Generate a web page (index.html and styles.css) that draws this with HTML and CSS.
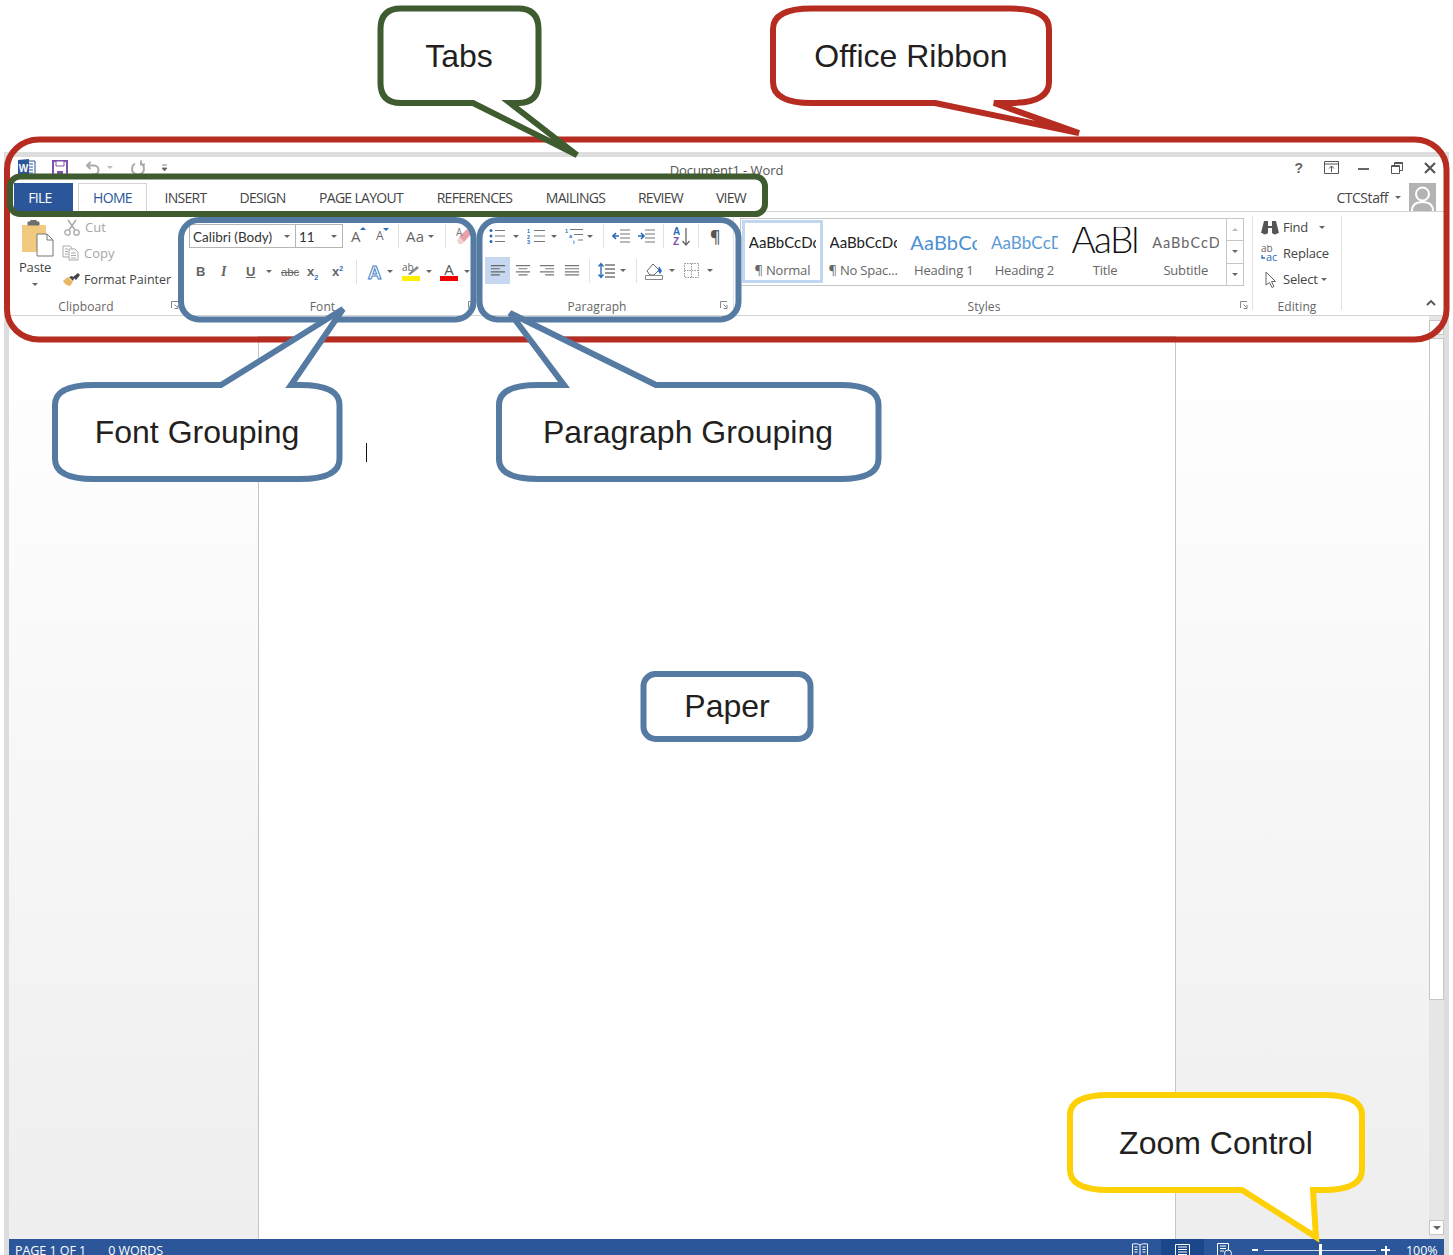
FILE: index.html
```html
<!DOCTYPE html>
<html lang="en">
<head>
<meta charset="utf-8">
<title>Word ribbon guide</title>
<link rel="stylesheet" href="styles.css">
</head>
<body>
<svg class="defs" aria-hidden="true">
  <symbol id="i-lines-left" viewBox="0 0 18 14"><path d="M1 1.5h16M1 5h10M1 8.500h16M1 12h10" fill="none" stroke="#666" stroke-width="1.300"/></symbol>
  <symbol id="i-lines-center" viewBox="0 0 18 14"><path d="M1 1.500h16M4 5h10M1 8.500h16M4 12h10" fill="none" stroke="#777" stroke-width="1.300"/></symbol>
  <symbol id="i-lines-right" viewBox="0 0 18 14"><path d="M1 1.500h16M7 5h10M1 8.500h16M7 12h10" fill="none" stroke="#777" stroke-width="1.300"/></symbol>
  <symbol id="i-lines-full" viewBox="0 0 18 14"><path d="M1 1.500h16M1 5h16M1 8.500h16M1 12h16" fill="none" stroke="#777" stroke-width="1.300"/></symbol>
  <symbol id="i-launcher" viewBox="0 0 8 8"><path d="M.5 7V.5H7M3.500 3.500l3 3M7 4v3.500H3.500" fill="none" stroke="#888" stroke-width="1"/></symbol>
</svg>

<div class="window">
  <header class="titlebar">
    <div class="qat">
      <svg class="qat-word" viewBox="0 0 18 18"><path d="M8 2h9v14H8z" fill="#fff" stroke="#2b579a"/><path d="M10 5h5M10 8h5M10 11h5M10 14h5" stroke="#2b579a"/><path d="M0 1l11-1v18L0 17z" fill="#2b579a"/><text class="logo-w" x="5.500" y="12.500">W</text></svg>
      <svg class="qat-save" viewBox="0 0 16 16"><path d="M1 1h14v14H1z" fill="#fff" stroke="#8052ac" stroke-width="2"/><path d="M4 1h8v5H4z" fill="#fff" stroke="#8052ac"/><path d="M5 11h6v4H5z" fill="#8052ac"/></svg>
      <svg class="qat-undo" viewBox="0 0 16 16"><path d="M5.500 2L2 5.500 5.500 9M2 5.500h7a4.500 4.500 0 0 1 0 9H7" fill="none" stroke="#aaa" stroke-width="2"/></svg>
      <span class="caret caret-light qat-caret"></span>
      <svg class="qat-redo" viewBox="0 0 16 16"><path d="M5 3.500A6 6 0 1 0 11 3.500M11 .5v4h4" fill="none" stroke="#aaa" stroke-width="2"/></svg>
      <svg class="qat-more" viewBox="0 0 7 8"><path d="M1 1h5M1 4h5L3.500 7z" fill="#666" stroke="#666" stroke-width=".8"/></svg>
    </div>
    <div class="doc-title">Document1 - Word</div>
    <div class="win-controls">
      <span class="help">?</span>
      <svg class="wc-ribbon" viewBox="0 0 15 13"><path d="M.5.500h14v12H.500zM.5 3h14M7.500 11V5M5 7.500L7.500 5 10 7.500" fill="none" stroke="#555"/></svg>
      <svg class="wc-min" viewBox="0 0 11 3"><path d="M0 0h11v2H0z" fill="#666"/></svg>
      <svg class="wc-restore" viewBox="0 0 12 12"><path d="M.5 3.500h8v8h-8zM3.500 3.500v-3h8v8h-3M.5 4.500h8M3.500 1.500h8" fill="none" stroke="#555"/></svg>
      <svg class="wc-close" viewBox="0 0 12 12"><path d="M1 1l10 10M11 1L1 11" fill="none" stroke="#555" stroke-width="2.200"/></svg>
    </div>
  </header>

  <nav class="tabbar">
    <span class="tab-file">FILE</span>
    <span class="tab-home">HOME</span>
    <div class="tabs">
      <span>INSERT</span><span>DESIGN</span><span>PAGE LAYOUT</span><span>REFERENCES</span><span>MAILINGS</span><span>REVIEW</span><span>VIEW</span>
    </div>
    <div class="account">
      <span class="account-name">CTCStaff</span>
      <span class="caret"></span>
      <svg class="avatar" viewBox="0 0 27 28"><path d="M0 0h27v28H0z" fill="#b3b3b3"/><circle cx="13.500" cy="11" r="6.500" fill="#b3b3b3" stroke="#fff" stroke-width="2"/><path d="M3 28c0-7 5-9 10.500-9S24 21 24 28" fill="#b3b3b3" stroke="#fff" stroke-width="2"/></svg>
    </div>
  </nav>

  <section class="ribbon">
    <div class="group g-clipboard">
      <div class="clip-body">
        <div class="paste">
          <svg class="paste-icon" viewBox="0 0 33 37"><path d="M1 5h23a1 1 0 0 1 1 1v26H2a1 1 0 0 1-1-1z" fill="#f1c97f"/><path d="M7 5h11V2h-2.500a3 3 0 0 0-6 0H7z" fill="#6f6f6f" stroke="#6f6f6f"/><path d="M16 14h10l6 6v16H16z" fill="#fff" stroke="#777"/><path d="M26 14v6h6" fill="none" stroke="#777"/></svg>
          <span class="paste-label">Paste</span>
          <span class="caret paste-caret"></span>
        </div>
        <div class="stack">
          <div class="cmd cmd-off"><svg class="ico-cut" viewBox="0 0 16 17"><path d="M4 1l7 10M12 1L5 11" fill="none" stroke="#aaa" stroke-width="1.500"/><circle cx="3.500" cy="13.500" r="2.700" fill="none" stroke="#aaa" stroke-width="1.300"/><circle cx="12.500" cy="13.500" r="2.700" fill="none" stroke="#aaa" stroke-width="1.300"/></svg><span>Cut</span></div>
          <div class="cmd cmd-off"><svg class="ico-copy" viewBox="0 0 17 16"><path d="M1 1h7l2 2v9H1z" fill="#fff" stroke="#aaa"/><path d="M7 4h6l3 3v8H7z" fill="#fff" stroke="#aaa"/><path d="M3 4h3M3 6.500h3M3 9h3M9 8h5M9 10.500h5M9 13h5" stroke="#aaa"/></svg><span>Copy</span></div>
          <div class="cmd cmd-label"><svg class="ico-painter" viewBox="0 0 18 15"><path d="M1 9l5-4 5 5-3 4c-3 0-6-3-7-5z" fill="#e9b762"/><path d="M7 5l3-1 2 2-1 3zM11 5l5-4 2 2-4 5z" fill="#444"/></svg><span>Format Painter</span></div>
        </div>
      </div>
      <div class="group-label">Clipboard<svg class="launcher launch-clip"><use href="#i-launcher"/></svg></div>
    </div>

    <div class="group g-font">
      <div class="tool-row font-top">
        <div class="combo combo-font"><span>Calibri (Body)</span><span class="caret"></span></div>
        <div class="combo combo-size"><span>11</span><span class="caret"></span></div>
        <span class="glyph grow">A<i class="tri tri-up"></i></span>
        <span class="glyph shrink">A<i class="tri tri-down"></i></span>
        <span class="sep"></span>
        <span class="glyph case">Aa</span>
        <span class="caret"></span>
        <span class="sep"></span>
        <svg class="ico-eraser" viewBox="0 0 17 18"><path d="M3 10l8-8 5 4-8 9z" fill="#e9a0a8"/><path d="M3 10l5 5-2 2H3l-2-3z" fill="#f3ced2"/><text class="eraser-a" x="0" y="9">A</text></svg>
      </div>
      <div class="tool-row font-bottom">
        <b class="glyph fmt">B</b>
        <i class="glyph fmt fmt-i">I</i>
        <span class="glyph fmt fmt-u">U</span>
        <span class="caret"></span>
        <span class="glyph fmt-abc">abc</span>
        <span class="glyph fmt-x">x<sub>2</sub></span>
        <span class="glyph fmt-x">x<sup>2</sup></span>
        <span class="sep"></span>
        <svg class="ico-effect" viewBox="0 0 17 18"><text class="effect-a" x="8.500" y="16">A</text></svg>
        <span class="caret"></span>
        <svg class="ico-hl" viewBox="0 0 18 19"><text class="hl-ab" x="0" y="9">ab</text><path d="M6 12l9-8 2 2-9 7z" fill="#8a8a8a"/><path d="M0 14h18v5H0z" fill="#ffee00"/></svg>
        <span class="caret"></span>
        <svg class="ico-color" viewBox="0 0 18 19"><text class="color-a" x="9" y="13">A</text><path d="M0 14h18v5H0z" fill="#f00000"/></svg>
        <span class="caret"></span>
      </div>
      <div class="group-label">Font<svg class="launcher launch-font"><use href="#i-launcher"/></svg></div>
    </div>

    <div class="group g-para">
      <div class="tool-row para-top">
        <svg class="ico-list" viewBox="0 0 16 16"><path d="M6 2.500h10M6 8h10M6 13.500h10" stroke="#777" stroke-width="1.200"/><circle cx="2" cy="2.500" r="1.500" fill="#2b6cb8"/><circle cx="2" cy="8" r="1.500" fill="#2b6cb8"/><circle cx="2" cy="13.500" r="1.500" fill="#2b6cb8"/></svg>
        <span class="caret"></span>
        <svg class="ico-list-w" viewBox="0 0 18 16"><path d="M7 2.500h11M7 8h11M7 13.500h11" stroke="#777" stroke-width="1.200"/><text class="num" x="0" y="5">1</text><text class="num" x="0" y="10.500">2</text><text class="num" x="0" y="16">3</text></svg>
        <span class="caret"></span>
        <svg class="ico-list-w" viewBox="0 0 18 16"><path d="M5 1.500h13M9 6.500h9M13 12h5" stroke="#777" stroke-width="1.200"/><text class="num" x="0" y="5">1</text><text class="num" x="4" y="10">a</text><text class="num" x="8" y="15.500">i</text></svg>
        <span class="caret"></span>
        <span class="sep"></span>
        <svg class="ico-list-w" viewBox="0 0 18 14"><path d="M8 1h10M8 5h10M8 9h10M8 13h10" stroke="#777" stroke-width="1.200"/><path d="M7 7H1M4 4L1 7l3 3" fill="none" stroke="#2b6cb8" stroke-width="1.600"/></svg>
        <svg class="ico-list-w" viewBox="0 0 18 14"><path d="M8 1h10M8 5h10M8 9h10M8 13h10" stroke="#777" stroke-width="1.200"/><path d="M1 7h6M4 4l3 3-3 3" fill="none" stroke="#2b6cb8" stroke-width="1.600"/></svg>
        <span class="sep"></span>
        <svg class="ico-sort" viewBox="0 0 17 19"><text class="sort-a" x="0" y="8">A</text><text class="sort-z" x="0" y="18">Z</text><path d="M13 1v16M9.500 14l3.500 4 3.500-4" fill="none" stroke="#666" stroke-width="1.300"/></svg>
        <span class="sep"></span>
        <span class="glyph pilcrow">¶</span>
      </div>
      <div class="tool-row para-bottom">
        <span class="align-on"><svg class="ico-align"><use href="#i-lines-left"/></svg></span>
        <svg class="ico-align"><use href="#i-lines-center"/></svg>
        <svg class="ico-align"><use href="#i-lines-right"/></svg>
        <svg class="ico-align"><use href="#i-lines-full"/></svg>
        <span class="sep"></span>
        <svg class="ico-spacing" viewBox="0 0 17 17"><path d="M7 3h10M7 7h10M7 11h10M7 15h10" stroke="#777" stroke-width="1.300"/><path d="M3 2v13M.5 4.500L3 1.500l2.500 3M.5 12.500l2.500 3 2.500-3" fill="none" stroke="#2b6cb8" stroke-width="1.400"/></svg>
        <span class="caret"></span>
        <span class="sep"></span>
        <svg class="ico-shade" viewBox="0 0 18 18"><path d="M2 9l6-7 6 6-5 5H5z" fill="#fff" stroke="#666"/><path d="M14 4l3 5-2 3-2-3z" fill="#2b6cb8"/><path d="M.5 13.500h17v4H.5z" fill="#fff" stroke="#888"/></svg>
        <span class="caret"></span>
        <svg class="ico-borders" viewBox="0 0 15 15"><path d="M.5.500h14v14H.500zM7.500.5v14M.5 7.500h14" fill="none" stroke="#999" stroke-dasharray="1.500 1"/></svg>
        <span class="caret"></span>
      </div>
      <div class="group-label">Paragraph<svg class="launcher launch-para"><use href="#i-launcher"/></svg></div>
    </div>
    <span class="vline"></span>

    <div class="group g-styles">
      <div class="gallery">
        <div class="style-item style-on"><span class="pv pv-body">AaBbCcDc</span><span class="style-name">¶ Normal</span></div>
        <div class="style-item"><span class="pv pv-body">AaBbCcDc</span><span class="style-name">¶ No Spac...</span></div>
        <div class="style-item"><span class="pv pv-h1">AaBbCc</span><span class="style-name">Heading 1</span></div>
        <div class="style-item"><span class="pv pv-h2">AaBbCcD</span><span class="style-name">Heading 2</span></div>
        <div class="style-item"><span class="pv pv-title">AaBl</span><span class="style-name">Title</span></div>
        <div class="style-item"><span class="pv pv-sub">AaBbCcD</span><span class="style-name">Subtitle</span></div>
        <div class="gallery-scroll">
          <span class="gs-btn gs-off"><i class="caret caret-up caret-light"></i></span>
          <span class="gs-btn"><i class="caret"></i></span>
          <span class="gs-btn gs-more"><i class="caret"></i></span>
        </div>
      </div>
      <div class="group-label">Styles<svg class="launcher launch-styles"><use href="#i-launcher"/></svg></div>
    </div>
    <span class="vline"></span>

    <div class="group g-editing">
      <div class="stack">
        <div class="cmd"><svg class="ico-find" viewBox="0 0 18 15"><path d="M3 1h4v5h4V1h4l3 12h-7V8H7v5H0z" fill="#555"/><path d="M1.500 13a3 2 0 0 0 5 0M11.500 13a3 2 0 0 0 5 0" fill="#555" stroke="#555"/></svg><span>Find</span><span class="caret find-caret"></span></div>
        <div class="cmd"><svg class="ico-replace" viewBox="0 0 18 17"><text class="rep-top" x="0" y="7">ab</text><text class="rep-bot" x="5" y="16">ac</text><path d="M1 10v3h3" fill="none" stroke="#2b6cb8" stroke-width="1.300"/></svg><span>Replace</span></div>
        <div class="cmd"><svg class="ico-select" viewBox="0 0 12 17"><path d="M1 1l9.500 9.500H6.500L9 15.500l-2 1-2.500-5L1 14z" fill="#fff" stroke="#666"/></svg><span>Select</span><span class="caret select-caret"></span></div>
      </div>
      <div class="group-label">Editing</div>
    </div>
    <span class="vline"></span>
    <svg class="collapse" viewBox="0 0 10 6"><path d="M1 5l4-4 4 4" fill="none" stroke="#555" stroke-width="1.800"/></svg>
  </section>

  <main class="doc">
    <div class="gutter"></div>
    <div class="page"><span class="text-cursor"></span></div>
    <div class="gutter gutter-right"></div>
    <div class="vscroll">
      <span class="sb-arrow"><i class="caret caret-up caret-dark"></i></span>
      <span class="sb-thumb"></span>
      <span class="sb-arrow sb-bottom"><i class="caret caret-dark"></i></span>
    </div>
  </main>

  <footer class="status">
    <span class="status-text">PAGE 1 OF 1</span>
    <span class="status-text">0 WORDS</span>
    <div class="status-right">
      <svg class="st-book" viewBox="0 0 16 14"><path d="M.5 1C3 .5 6 .5 8 2c2-1.500 5-1.500 7.500-1v12C13 12.500 10 12.500 8 14c-2-1.500-5-1.500-7.500-1zM8 2v12M2.500 4h3M2.500 6.500h3M2.500 9h3M10.500 4h3M10.500 6.500h3M10.500 9h3" fill="none" stroke="#fff"/></svg>
      <span class="st-active"><svg class="st-print" viewBox="0 0 15 14"><path d="M.5.500h14V16H.500z" fill="none" stroke="#fff"/><path d="M3 3h9M3 5.500h9M3 8h9M3 10.500h9M3 13h9" stroke="#fff"/></svg></span>
      <svg class="st-web" viewBox="0 0 15 14"><path d="M.5.500h11v13H.500zM3 3h6M3 5.500h6M3 8h4" fill="none" stroke="#fff"/><circle cx="11" cy="10.500" r="3.500" fill="#2b579a" stroke="#fff"/></svg>
      <span class="zoom-minus"></span>
      <span class="zoom-track"><span class="zoom-thumb"></span></span>
      <span class="zoom-plus"></span>
      <span class="status-text zoom-pct">100%</span>
    </div>
  </footer>
</div>

<!-- Annotation layer: rings round the ribbon regions and their speech bubbles -->
<svg class="notes" viewBox="0 0 1453 1255">
  <rect class="ring ring-red" x="7" y="139.500" width="1439.500" height="200" rx="32" ry="30"/>
  <rect class="ring ring-green" x="10" y="176.500" width="755" height="37.500" rx="10"/>
  <rect class="ring ring-blue" x="181" y="220" width="292.500" height="99.500" rx="18"/>
  <rect class="ring ring-blue" x="479.500" y="220" width="259" height="99.500" rx="18"/>

  <path class="bubble ring-green" d="M473 103L577 155 510 103H518Q538.500 103 538.500 83V29Q538.500 8.500 518 8.500H401Q380.500 8.500 380.500 29V83Q380.500 103 401 103Z"/>
  <text class="note-text" x="459" y="67">Tabs</text>

  <path class="bubble ring-red" d="M935 103L1079 133 994 103H1010Q1049 103 1049 82V29Q1049 8.500 1010 8.500H812Q773 8.500 773 29V82Q773 103 812 103Z"/>
  <text class="note-text" x="911" y="67">Office Ribbon</text>

  <path class="bubble ring-blue" d="M221 385L343 309 291 385H300Q339.500 385 339.500 405V459Q339.500 479 300 479H94Q55 479 55 459V405Q55 385 94 385Z"/>
  <text class="note-text" x="197" y="443">Font Grouping</text>

  <path class="bubble ring-blue" d="M656 385L510 313 564 385H538Q499 385 499 405V459Q499 479 538 479H840Q878.500 479 878.500 459V405Q878.500 385 840 385Z"/>
  <text class="note-text" x="688" y="443">Paragraph Grouping</text>

  <rect class="bubble ring-blue" x="643.500" y="674" width="167" height="65" rx="12"/>
  <text class="note-text" x="727" y="717">Paper</text>

  <path class="bubble ring-yellow" d="M1242 1190L1316 1237 1313 1190H1323Q1362 1190 1362 1170V1115Q1362 1095 1323 1095H1109Q1070 1095 1070 1115V1170Q1070 1190 1109 1190Z"/>
  <text class="note-text" x="1216" y="1154">Zoom Control</text>
</svg>
</body>
</html>
```

FILE: styles.css
```css
* { box-sizing: border-box; }

html, body { margin: 0; height: 1255px; overflow: hidden; background: #fff; }

body {
  position: relative;
  padding: 152px 4px 0;
  font-family: "Open Sans", "Noto Sans", sans-serif;
  font-size: 12px;
  color: #444;
}

svg { display: block; flex: none; }
.defs { width: 0; height: 0; position: absolute; }

.window {
  border: 5px solid #ddd;
  border-bottom: 0;
  height: 1103px;
  overflow: hidden;
  background: #fff;
}

/* Title bar */
.titlebar {
  height: 23px;
  display: grid;
  grid-template-columns: 1fr auto 1fr;
  align-items: center;
}
.qat { display: flex; align-items: center; padding: 0 0 2px 9px; }
.qat-word { width: 18px; height: 18px; margin-right: 16px; }
.logo-w { font: bold 10px "Liberation Sans", sans-serif; fill: #fff; text-anchor: middle; }
.qat-save { width: 16px; height: 16px; margin-right: 17px; }
.qat-undo { width: 16px; height: 16px; margin-right: 6px; }
.qat-caret { margin-right: 17px; }
.qat-redo { width: 16px; height: 16px; margin-right: 15px; }
.qat-more { width: 7px; height: 8px; }
.doc-title { font-size: 13px; color: #555; letter-spacing: -.08px; padding-top: 2px; }
.win-controls { display: flex; align-items: center; justify-content: flex-end; padding: 0 8px 2px 0; }
.help { font: bold 14px "Liberation Sans", sans-serif; color: #666; margin-right: 21px; }
.wc-ribbon { width: 15px; height: 13px; margin-right: 19px; }
.wc-min { width: 11px; height: 3px; margin-right: 22px; margin-top: 4px; }
.wc-restore { width: 12px; height: 12px; margin-right: 21px; }
.wc-close { width: 12px; height: 12px; }

/* Tab strip */
.tabbar {
  height: 32px;
  padding: 3px 0 0 5px;
  display: flex;
  border-bottom: 1px solid #d4d4d4;
  font-size: 14px;
  letter-spacing: -.7px;
}
.tab-file {
  width: 59px;
  background: #2b579a;
  color: #fff;
  display: grid;
  place-items: center;
  padding-right: 7px;
  margin-right: 5px;
}
.tab-home {
  width: 69px;
  height: 29px;
  border: 1px solid #d4d4d4;
  border-bottom-color: #fff;
  color: #2b579a;
  background: #fff;
  display: grid;
  place-items: center;
}
.tabs {
  display: grid;
  grid-template-columns: 77px 77px 120px 107px 95px 75px 66px;
  justify-items: center;
  align-items: center;
}
.account { margin-left: auto; display: flex; align-items: center; padding-right: 8px; letter-spacing: 0; }
.account-name { font-size: 14px; letter-spacing: -.45px; margin-right: 7px; }
.avatar { width: 27px; height: 28px; margin-left: 8px; }

/* Small dropdown triangle shared by every control */
.caret {
  display: block;
  flex: none;
  width: 0;
  height: 0;
  border-left: 3px solid transparent;
  border-right: 3px solid transparent;
  border-top: 3px solid #666;
}
.caret-light { border-top-color: #bbb; }
.caret-up { border-top: 0; border-bottom: 3px solid #bbb; }
.caret-dark { border-left-width: 4px; border-right-width: 4px; border-top-width: 4px; border-top-color: #666; }
.caret-up.caret-dark { border-top-width: 0; border-bottom: 4px solid #888; }

/* Ribbon */
.ribbon {
  height: 104px;
  display: flex;
  border-bottom: 1px solid #d4d4d4;
}
.group { display: flex; flex-direction: column; position: relative; }
.group-label {
  margin-top: auto;
  height: 17px;
  line-height: 17px;
  text-align: center;
  color: #666;
  position: relative;
  letter-spacing: .1px;
}
.launcher { position: absolute; width: 8px; height: 8px; top: 3px; }
.launch-clip { left: 162px; }
.launch-font { left: 288px; }
.launch-para { left: 243px; }
.launch-styles { left: 502px; }
.vline { width: 1px; margin: 4px 0 5px; background: #e1e1e1; flex: none; }

.g-clipboard { width: 171px; }
.g-clipboard .group-label { padding-right: 17px; }
.clip-body { display: flex; padding: 2px 0 0 10px; }
.paste { width: 43px; display: flex; flex-direction: column; align-items: flex-start; }
.paste-icon { width: 33px; height: 37px; margin: 6px 0 0 2px; }
.paste-label { font-size: 13px; margin-top: 1px; letter-spacing: -.2px; line-height: 18px; }
.paste-caret { margin: 7px 0 0 13px; }

.stack { display: flex; flex-direction: column; }
.cmd { height: 26px; display: flex; align-items: center; }
.cmd > svg { margin-right: 5px; }
.cmd-off { color: #a6a6a6; }
.cmd-off span { font-size: 13px; }
.cmd-label span { font-size: 12.500px; }
.ico-cut { width: 16px; height: 17px; margin-left: 2px; margin-right: 5px; }
.cmd > .ico-copy { width: 17px; height: 16px; }
.cmd > .ico-painter { width: 18px; height: 15px; margin-right: 4px; }

.g-font { width: 297px; }
.g-font .group-label { padding-right: 12px; }
.tool-row { display: grid; align-items: center; justify-items: start; }
.font-top {
  margin-top: 12px;
  height: 24px;
  padding-left: 9px;
  grid-template-columns: 106px 56px 25px 22px 8px 22px 17px 11px 17px;
}
.font-bottom {
  margin-top: 10px;
  height: 27px;
  padding-left: 16px;
  grid-template-columns: 25px 25px 20px 15px 26px 25px 24px 10px 21px 15px 24px 14px 24px 8px;
}
.sep { width: 1px; height: 24px; background: #e1e1e1; display: block; }
.combo {
  height: 24px;
  border: 1px solid #b5b5b5;
  display: flex;
  align-items: center;
  justify-content: space-between;
  padding: 2px 5px 0 3px;
  font: 13.500px "Lato", sans-serif;
  color: #333;
}
.combo .caret { margin-top: -2px; }
.combo-font { width: 107px; }
.combo-size { width: 48px; }
.glyph { font-family: "Open Sans", sans-serif; color: #666; display: block; position: relative; }
.grow { font-size: 15px; line-height: 1; }
.shrink { font-size: 12px; line-height: 1; }
.tri { position: absolute; top: -2px; right: -5px; width: 0; height: 0; border: 3px solid transparent; }
.tri-up { border-top: 0; border-bottom: 3px solid #2b6cb8; }
.tri-down { border-bottom: 0; border-top: 3px solid #2b6cb8; }
.case { font-size: 15px; line-height: 1; letter-spacing: .2px; }
.ico-eraser { width: 17px; height: 18px; }
.eraser-a { font: 10px "Open Sans", sans-serif; fill: #777; }
.fmt { font: bold 13px "Liberation Sans", sans-serif; color: #666; }
.fmt-i { font-family: "Liberation Serif", serif; font-style: italic; font-size: 14px; }
.fmt-u { text-decoration: underline; }
.fmt-abc { font: 11.500px "Liberation Sans", sans-serif; text-decoration: line-through; letter-spacing: -.2px; }
.fmt-x { font: bold 13px "Liberation Sans", sans-serif; line-height: 13px; }
.fmt-x sub, .fmt-x sup { font-size: 7px; color: #2b6cb8; line-height: 0; }
.ico-effect { width: 17px; height: 18px; }
.effect-a { font: bold 19px "Liberation Sans", sans-serif; fill: #fff; stroke: #3f7fc6; stroke-width: 1; text-anchor: middle; }
.ico-hl, .ico-color { width: 18px; height: 19px; }
.hl-ab { font: 10px "Open Sans", sans-serif; fill: #666; }
.color-a { font: 15px "Open Sans", sans-serif; fill: #555; text-anchor: middle; }

.g-para { width: 256px; }
.g-para .group-label { padding-right: 16px; }
.para-top {
  margin-top: 12px;
  height: 24px;
  padding-left: 12px;
  grid-template-columns: 24px 14px 24px 14px 22px 16px 9px 25px 26px 10px 25px 12px 14px;
}
.para-bottom {
  margin-top: 8px;
  height: 29px;
  padding-left: 8px;
  grid-template-columns: 30px 24px 25px 25px 9px 22px 16px 9px 24px 15px 23px 8px;
}
.ico-list { width: 16px; height: 16px; }
.ico-list-w { width: 18px; height: 16px; }
.num { font: bold 5.500px "Liberation Sans", sans-serif; fill: #2b6cb8; }
.ico-sort { width: 17px; height: 19px; }
.sort-a { font: bold 10px "Liberation Sans", sans-serif; fill: #2b6cb8; }
.sort-z { font: bold 10px "Liberation Sans", sans-serif; fill: #8052ac; }
.pilcrow { font-size: 16px; line-height: 1; color: #555; font-weight: 600; }
.align-on {
  width: 25px;
  height: 27px;
  background: #c5d8f0;
  display: grid;
  place-items: center;
}
.ico-align { width: 16px; height: 13px; }
.ico-spacing { width: 17px; height: 17px; }
.ico-shade { width: 18px; height: 18px; }
.ico-borders { width: 15px; height: 15px; }

.g-styles { width: 514px; margin-left: 4px; }
.g-styles .group-label { padding-right: 22px; }
.gallery {
  width: 504px;
  height: 68px;
  margin: 6px 0 0 2px;
  border: 1px solid #c6c6c6;
  border-width: 1px;
  display: flex;
  padding: 1px 0 0 1px;
}
.style-item {
  width: 81px;
  height: 63px;
  display: flex;
  flex-direction: column;
  align-items: center;
  overflow: hidden;
}
.style-on { border: 3px solid #c1d6f0; }
.style-on .pv { margin-top: -3px; }
.pv {
  display: block;
  flex: none;
  width: 67px;
  height: 43px;
  overflow: hidden;
  white-space: nowrap;
  font-family: "Lato", sans-serif;
  line-height: 45px;
  color: #222;
}
.pv-body { font-size: 15px; }
.pv-h1 { font-size: 20px; color: #4a90d4; letter-spacing: .2px; }
.pv-h2 { font-size: 17px; color: #5b9bd5; letter-spacing: .1px; }
.pv-title {
  font-size: 37px;
  font-weight: 300;
  color: #111;
  letter-spacing: -1.700px;
  margin-top: 7px;
  height: 36px;
  line-height: 23px;
}
.pv-sub { font-size: 14.500px; color: #666; letter-spacing: 1px; }
.style-name { font-size: 13px; letter-spacing: -.2px; color: #666; line-height: 15px; }
.gallery-scroll { display: flex; flex-direction: column; width: 17px; border-left: 1px solid #c6c6c6; margin-top: -1px; height: 66px; }
.gs-btn { flex: 1; display: grid; place-items: center; border-bottom: 1px solid #c6c6c6; }
.gs-btn:last-child { border-bottom: 0; }
.gs-more i { box-shadow: 0 -3px 0 -2px #666; }

.g-editing { width: 88px; }
.g-editing .stack { padding: 2px 0 0 8px; }
.g-editing .cmd span { font-size: 13px; letter-spacing: -.2px; }
.g-editing .cmd span.caret { font-size: 0; }
.cmd > .ico-find { width: 18px; height: 15px; margin-right: 4px; }
.cmd > .ico-replace { width: 18px; height: 17px; margin-right: 4px; }
.cmd > .ico-select { width: 12px; height: 17px; margin: 0 6px 0 4px; }
.rep-top { font: 10px "Open Sans", sans-serif; fill: #666; }
.rep-bot { font: 11px "Open Sans", sans-serif; fill: #2b6cb8; }
.find-caret { margin-left: 11px; }
.select-caret { margin-left: 3px; }
.collapse { width: 10px; height: 6px; margin: 88px 0 0 84px; }

/* Document area */
.doc {
  height: 923px;
  display: flex;
  background: linear-gradient(#fff 0, #fff 30px, #eee 100%);
}
.gutter { width: 249px; }
.gutter-right { width: 253px; }
.page {
  width: 918px;
  margin-top: 20px;
  background: #fff;
  border: 1px solid #c6c6c6;
  border-width: 1px 1px 0;
  padding: 106px 0 0 107px;
}
.text-cursor { display: block; width: 1px; height: 19px; background: #111; }
.vscroll {
  width: 15px;
  background: #e6e6e6;
  display: flex;
  flex-direction: column;
  padding: 4px 0;
}
.sb-arrow {
  height: 15px;
  background: #fff;
  border: 1px solid #c6c6c6;
  display: grid;
  place-items: center;
}
.sb-bottom { margin-top: auto; }
.sb-thumb { height: 662px; margin-top: 3px; background: #fff; border: 1px solid #c6c6c6; }

/* Status bar */
.status {
  height: 16px;
  background: #2b579a;
  color: #fff;
  display: flex;
  padding-left: 6px;
}
.status-text { font-size: 12.500px; line-height: 24px; letter-spacing: -.05px; margin-right: 22px; }
.status-right {
  margin-left: auto;
  width: 312px;
  height: 16px;
  display: grid;
  grid-template-columns: 29px 43px 48px 12px 117px 25px auto;
  grid-template-rows: 16px;
  align-items: center;
}
.st-book { width: 16px; height: 14px; margin-top: 5px; }
.st-active { height: 16px; background: #19478a; display: grid; place-items: center; }
.st-print { width: 15px; height: 14px; margin-top: 5px; }
.st-web { width: 15px; height: 14px; margin: 5px 0 0 13px; }
.zoom-minus { width: 6px; height: 2px; background: #fff; margin-top: 6px; }
.zoom-track { width: 112px; height: 1px; background: #cfd9ea; display: block; position: relative; margin-top: 6px; }
.zoom-thumb { position: absolute; left: 55px; top: -6px; width: 3px; height: 13px; background: #fff; }
.zoom-plus { width: 9px; height: 9px; margin-top: 6px; background: linear-gradient(#fff, #fff) center / 9px 2px no-repeat, linear-gradient(#fff, #fff) center / 2px 9px no-repeat; }
.zoom-pct { line-height: 16px; margin: 8px 0 0; }

/* Annotation layer */
.notes { position: absolute; left: 0; top: 0; width: 1453px; height: 1255px; pointer-events: none; }
.ring { fill: none; stroke-width: 6; }
.bubble { fill: #fff; stroke-width: 6; stroke-miterlimit: 4; }
.ring-red { stroke: #b72c20; }
.ring-green { stroke: #3f5b30; }
.ring-blue { stroke: #557ba3; }
.ring-yellow { stroke: #fdd106; }
.note-text { font: 32px "Liberation Sans", Arial, sans-serif; fill: #231f20; text-anchor: middle; }
```
